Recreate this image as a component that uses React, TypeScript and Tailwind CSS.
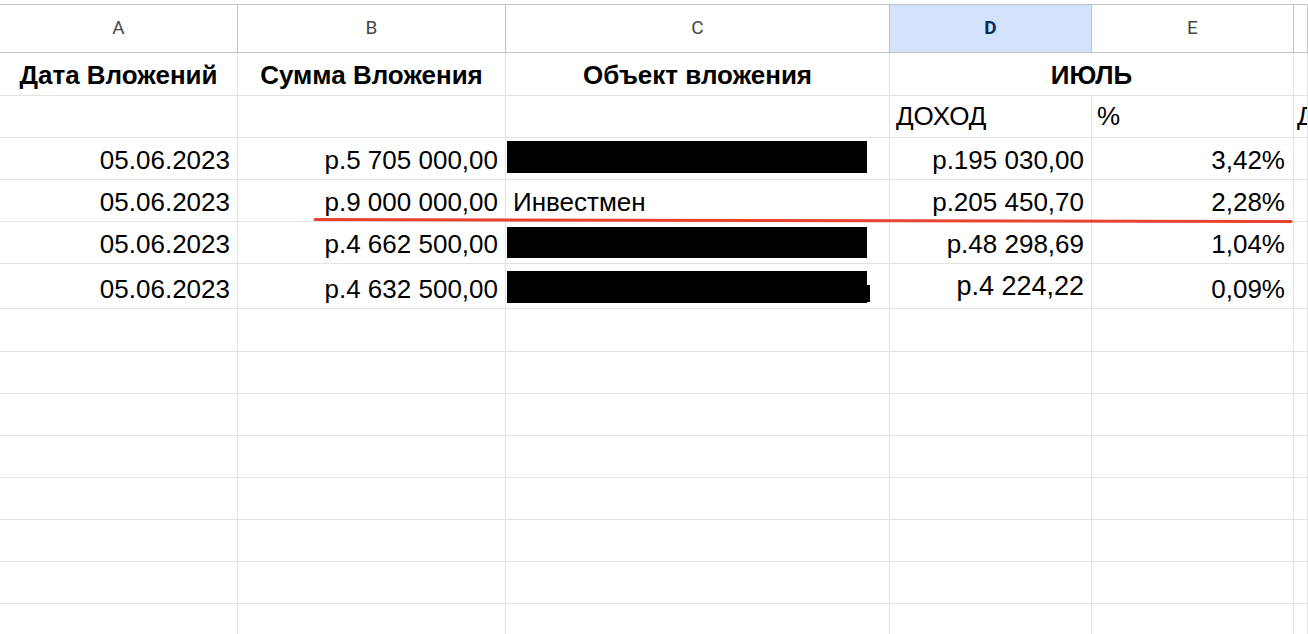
import React from "react";

const cols = "grid grid-cols-[238px_268px_384px_202px_202px_1fr]";
const font = { fontFamily: '"Liberation Sans", Arial, sans-serif' };

type Row = {
  date: string;
  sum: string;
  obj: string | null;
  objTop: string;
  objH: string;
  notch?: boolean;
  income: string;
  pct: string;
  h: string;
  big?: boolean;
};

const rows: Row[] = [
  { date: "05.06.2023", sum: "р.5 705 000,00", obj: null, objTop: "pt-[3px]", objH: "h-[32px]", income: "р.195 030,00", pct: "3,42%", h: "h-[42px]" },
  { date: "05.06.2023", sum: "р.9 000 000,00", obj: "Инвестмен", objTop: "", objH: "", income: "р.205 450,70", pct: "2,28%", h: "h-[42px]" },
  { date: "05.06.2023", sum: "р.4 662 500,00", obj: null, objTop: "pt-[5px]", objH: "h-[31px]", income: "р.48 298,69", pct: "1,04%", h: "h-[42px]" },
  { date: "05.06.2023", sum: "р.4 632 500,00", obj: null, objTop: "pt-[7px]", objH: "h-[32px]", notch: true, income: "р.4 224,22", pct: "0,09%", h: "h-[45px]", big: true },
];

const emptyHeights = ["h-[43px]", "h-[42px]", "h-[42px]", "h-[42px]", "h-[42px]", "h-[42px]", "h-[42px]", "h-[42px]"];

function Cell({ children, className = "" }: { children?: React.ReactNode; className?: string }) {
  return (
    <div className={`flex overflow-hidden whitespace-nowrap border-r border-b border-[#e2e2e2] ${className}`}>
      {children}
    </div>
  );
}

export default function App() {
  return (
    <div className="relative w-[1308px] h-[634px] overflow-hidden bg-white text-black" style={font}>
      <div className="h-[4px] border-b border-[#c4c4c4] box-content" />

      {/* column letters */}
      <div className={`${cols} h-[48px]`} style={{ fontFamily: "Roboto, Arial, sans-serif" }}>
        {["A", "B", "C", "D", "E", ""].map((l) => (
          <div
            key={l || "f"}
            className={`flex items-center justify-center border-r border-b border-[#c4c4c4] text-[19px] ${
              l === "D" ? "bg-[#d3e3fd] text-[#0b2a5c] font-bold" : "text-[#444746]"
            }`}
          >
            {l}
          </div>
        ))}
      </div>

      {/* header row */}
      <div className={`${cols} h-[43px] text-[26px] font-bold leading-none`}>
        <Cell className="items-end justify-center pb-[7px]">Дата Вложений</Cell>
        <Cell className="items-end justify-center pb-[7px]">Сумма Вложения</Cell>
        <Cell className="items-end justify-center pb-[7px]">Объект вложения</Cell>
        <Cell className="col-span-2 items-end justify-center pb-[7px]">ИЮЛЬ</Cell>
        <Cell />
      </div>

      {/* sub header */}
      <div className={`${cols} h-[42px] text-[26px] leading-none`}>
        <Cell />
        <Cell />
        <Cell />
        <Cell className="items-end pb-[8px] pl-[6px]">ДОХОД</Cell>
        <Cell className="items-end pb-[8px] pl-[5px]">%</Cell>
        <Cell className="items-end pb-[8px] pl-[3px]">Д</Cell>
      </div>

      {rows.map((r, i) => (
        <div key={i} className={`${cols} ${r.h} text-[26px] leading-none`}>
          <Cell className="items-end justify-end pr-[7px] pb-[6px]">{r.date}</Cell>
          <Cell className="items-end justify-end pr-[7px] pb-[6px]">{r.sum}</Cell>
          {r.obj ? (
            <Cell className="items-end pl-[7px] pb-[6px]">{r.obj}</Cell>
          ) : (
            <Cell className={`items-start pl-[1px] ${r.objTop}`}>
              <div className={`w-[360px] ${r.objH} bg-black`} />
              {r.notch && <div className="mt-[14px] w-[3px] h-[17px] bg-black" />}
            </Cell>
          )}
          <Cell className={`items-end justify-end pr-[7px] ${r.big ? "text-[27px] pb-[8px]" : "pb-[6px]"}`}>{r.income}</Cell>
          <Cell className="items-end justify-end pr-[8px] pb-[6px]">{r.pct}</Cell>
          <Cell />
        </div>
      ))}

      {emptyHeights.map((h, i) => (
        <div key={`e${i}`} className={`${cols} ${h}`}>
          <Cell />
          <Cell />
          <Cell />
          <Cell />
          <Cell />
          <Cell />
        </div>
      ))}

      {/* red underline drawn over the sheet */}
      <svg className="absolute left-0 top-0 pointer-events-none" width="1308" height="634">
        <line x1="315" y1="219.5" x2="1291" y2="221.5" stroke="#e8432e" strokeWidth="3" strokeLinecap="round" />
      </svg>
    </div>
  );
}
